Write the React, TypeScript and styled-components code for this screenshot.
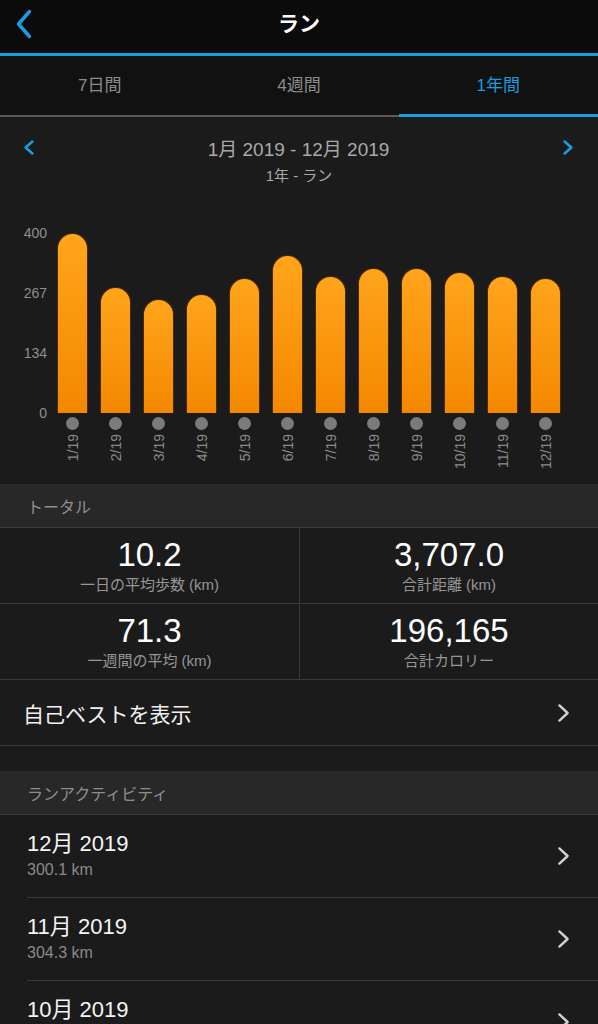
import React from "react";
import styled, { createGlobalStyle } from "styled-components";

const GlobalStyle = createGlobalStyle`
  html, body {
    margin: 0;
    padding: 0;
    background: #1b1b1b;
  }
  body {
    font-family: "Liberation Sans", "Noto Sans CJK JP", sans-serif;
    -webkit-font-smoothing: antialiased;
  }
`;

const months = [
  { label: "1/19", value: 400 },
  { label: "2/19", value: 280 },
  { label: "3/19", value: 253 },
  { label: "4/19", value: 264 },
  { label: "5/19", value: 300 },
  { label: "6/19", value: 351 },
  { label: "7/19", value: 304 },
  { label: "8/19", value: 322 },
  { label: "9/19", value: 322 },
  { label: "10/19", value: 313 },
  { label: "11/19", value: 304 },
  { label: "12/19", value: 300 },
];

const PLOT_H = 180;
const MAX = 400;

const Page = styled.div`
  width: 598px;
  min-height: 1024px;
  background: #1b1b1b;
  color: #fff;
  overflow: hidden;
`;

const NavBar = styled.header`
  display: grid;
  grid-template-columns: 60px 1fr 60px;
  align-items: center;
  height: 53px;
  background: #0b0b0b;
  border-bottom: 3px solid #1b9be0;
`;

const BackButton = styled.div`
  display: flex;
  align-items: center;
  padding-left: 15px;
  padding-bottom: 6px;
`;

const Title = styled.h1`
  margin: 0;
  text-align: center;
  font-family: "Noto Sans CJK JP", sans-serif;
  font-size: 21px;
  font-weight: 700;
  padding-bottom: 9px;
`;

const Tabs = styled.nav`
  display: flex;
  height: 61px;
  background: #111111;
`;

const Tab = styled.div<{ $active?: boolean }>`
  flex: 1;
  display: flex;
  align-items: center;
  justify-content: center;
  font-family: "Liberation Sans", "Noto Sans CJK JP", sans-serif;
  font-size: 17px;
  color: ${(p) => (p.$active ? "#1b9be0" : "#8c8c8c")};
  border-bottom: ${(p) => (p.$active ? "3px solid #1b9be0" : "2px solid #5a5a5a")};
  box-sizing: border-box;
  padding-bottom: ${(p) => (p.$active ? "4px" : "5px")};
`;

const ChartSection = styled.section`
  padding: 18px 0 15px;
`;

const RangeRow = styled.div`
  display: flex;
  align-items: center;
  justify-content: space-between;
  padding: 0 24px 0 23px;
  height: 24px;
`;

const RangeText = styled.div`
  font-size: 19px;
  color: #a9a9a9;
`;

const SubTitle = styled.div`
  text-align: center;
  font-size: 15px;
  line-height: 20px;
  margin-top: 7px;
  color: #a9a9a9;
`;

const Chart = styled.div`
  display: flex;
  margin-top: 39px;
`;

const Axis = styled.div`
  width: 47px;
  height: ${PLOT_H + 16}px;
  display: flex;
  flex-direction: column;
  justify-content: space-between;
  align-items: flex-end;
  font-size: 14px;
  line-height: 16px;
  color: #8f8f8f;
`;

const Slots = styled.div`
  display: grid;
  grid-template-columns: repeat(12, 43px);
  margin-left: 4px;
  padding-top: 8px;
`;

const Slot = styled.div`
  display: flex;
  flex-direction: column;
  align-items: center;
`;

const Plot = styled.div`
  height: ${PLOT_H}px;
  display: flex;
  align-items: flex-end;
`;

const Bar = styled.div`
  width: 31px;
  box-sizing: border-box;
  border: 1px solid #4a2a00;
  border-bottom: none;
  border-radius: 16px 16px 0 0;
  background: linear-gradient(180deg, #ffa51c 0%, #f48800 100%);
`;

const Dot = styled.div`
  width: 13px;
  height: 13px;
  border-radius: 50%;
  background: #7b7b7b;
  margin-top: 4px;
`;

const XLabel = styled.div`
  writing-mode: vertical-rl;
  transform: rotate(180deg);
  font-size: 14px;
  color: #8a8a8a;
  margin-top: 4px;
`;

const SectionHeader = styled.div`
  height: 43px;
  display: flex;
  align-items: center;
  padding-left: 27px;
  background: #282828;
  border-bottom: 1px solid #3a3a3a;
  font-family: "Noto Sans CJK JP", sans-serif;
  font-size: 16px;
  color: #8e8e8e;
`;

const StatGrid = styled.div`
  display: grid;
  grid-template-columns: 1fr 1fr;
`;

const StatCell = styled.div<{ $right?: boolean }>`
  height: 75px;
  display: flex;
  flex-direction: column;
  align-items: center;
  justify-content: center;
  border-bottom: 1px solid #3a3a3a;
  border-left: ${(p) => (p.$right ? "1px solid #3a3a3a" : "none")};
  background: #1b1b1b;
`;

const StatValue = styled.div`
  font-size: 33px;
  line-height: 36px;
  color: #ffffff;
`;

const StatLabel = styled.div`
  font-size: 15px;
  line-height: 18px;
  margin-top: 3px;
  color: #969696;
`;

const LinkRow = styled.div`
  height: 65px;
  display: flex;
  align-items: center;
  justify-content: space-between;
  padding: 0 28px 0 23px;
  border-bottom: 1px solid #3a3a3a;
  font-family: "Noto Sans CJK JP", sans-serif;
  font-size: 21px;
  color: #f2f2f2;
`;

const Spacer = styled.div`
  height: 25px;
`;

const List = styled.div`
  padding-left: 27px;
`;

const Item = styled.div`
  height: 82px;
  display: flex;
  align-items: center;
  justify-content: space-between;
  padding-right: 28px;
  border-bottom: 1px solid #3a3a3a;
`;

const ItemText = styled.div`
  display: flex;
  flex-direction: column;
  padding-bottom: 2px;
`;

const ItemTitle = styled.div`
  font-size: 22px;
  line-height: 28px;
  color: #f5f5f5;
`;

const ItemSub = styled.div`
  font-size: 16px;
  line-height: 20px;
  margin-top: 2px;
  color: #8a8a8a;
`;

const Chevron = ({ dir, color, w, h, sw }: { dir: "l" | "r"; color: string; w: number; h: number; sw: number }) => (
  <svg width={w} height={h} viewBox={`0 0 ${w} ${h}`} fill="none">
    <polyline
      points={
        dir === "l"
          ? `${w - sw},${sw} ${sw},${h / 2} ${w - sw},${h - sw}`
          : `${sw},${sw} ${w - sw},${h / 2} ${sw},${h - sw}`
      }
      stroke={color}
      strokeWidth={sw}
      strokeLinecap="round"
      strokeLinejoin="round"
    />
  </svg>
);

const activities = [
  { title: "12月 2019", sub: "300.1 km" },
  { title: "11月 2019", sub: "304.3 km" },
  { title: "10月 2019", sub: "313.2 km" },
];

export default function App() {
  return (
    <Page>
      <GlobalStyle />
      <NavBar>
        <BackButton>
          <Chevron dir="l" color="#1b9be0" w={18} h={32} sw={3.5} />
        </BackButton>
        <Title>ラン</Title>
        <div />
      </NavBar>
      <Tabs>
        <Tab>7日間</Tab>
        <Tab>4週間</Tab>
        <Tab $active>1年間</Tab>
      </Tabs>

      <ChartSection>
        <RangeRow>
          <Chevron dir="l" color="#1b9be0" w={12} h={17} sw={2.6} />
          <RangeText>1月 2019 - 12月 2019</RangeText>
          <Chevron dir="r" color="#1b9be0" w={12} h={17} sw={2.6} />
        </RangeRow>
        <SubTitle>1年 - ラン</SubTitle>
        <Chart>
          <Axis>
            <span>400</span>
            <span>267</span>
            <span>134</span>
            <span>0</span>
          </Axis>
          <Slots>
            {months.map((m) => (
              <Slot key={m.label}>
                <Plot>
                  <Bar style={{ height: (m.value / MAX) * PLOT_H }} />
                </Plot>
                <Dot />
                <XLabel>{m.label}</XLabel>
              </Slot>
            ))}
          </Slots>
        </Chart>
      </ChartSection>

      <SectionHeader>トータル</SectionHeader>
      <StatGrid>
        <StatCell>
          <StatValue>10.2</StatValue>
          <StatLabel>一日の平均歩数 (km)</StatLabel>
        </StatCell>
        <StatCell $right>
          <StatValue>3,707.0</StatValue>
          <StatLabel>合計距離 (km)</StatLabel>
        </StatCell>
        <StatCell>
          <StatValue>71.3</StatValue>
          <StatLabel>一週間の平均 (km)</StatLabel>
        </StatCell>
        <StatCell $right>
          <StatValue>196,165</StatValue>
          <StatLabel>合計カロリー</StatLabel>
        </StatCell>
      </StatGrid>
      <LinkRow>
        自己ベストを表示
        <Chevron dir="r" color="#d0d0d0" w={13} h={20} sw={2.4} />
      </LinkRow>
      <Spacer />
      <SectionHeader>ランアクティビティ</SectionHeader>
      <List>
        {activities.map((a) => (
          <Item key={a.title}>
            <ItemText>
              <ItemTitle>{a.title}</ItemTitle>
              <ItemSub>{a.sub}</ItemSub>
            </ItemText>
            <Chevron dir="r" color="#d0d0d0" w={13} h={20} sw={2.4} />
          </Item>
        ))}
      </List>
    </Page>
  );
}
